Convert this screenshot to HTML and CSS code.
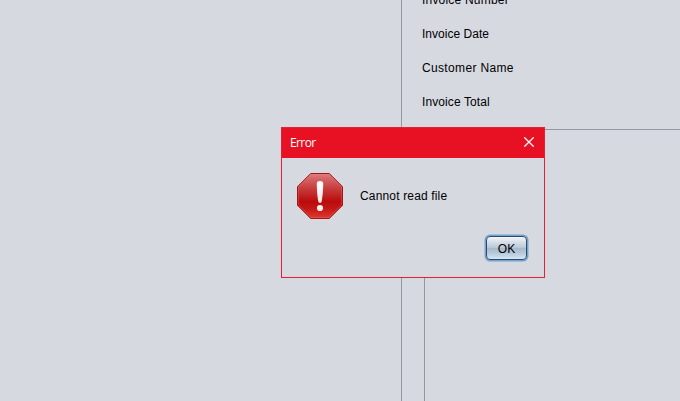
FILE: index.html
```html
<!DOCTYPE html>
<html lang="en">
<head>
<meta charset="utf-8">
<title>Invoices</title>
<link rel="stylesheet" href="styles.css">
</head>
<body>
<main class="window">
  <section class="list-pane"></section>
  <section class="detail-pane">
    <div class="fields">
      <label class="number">Invoice Number</label>
      <label class="date">Invoice Date</label>
      <label class="customer">Customer Name</label>
      <label>Invoice Total</label>
    </div>
    <div class="items"></div>
  </section>
</main>
<div class="dialog" role="alertdialog">
  <header class="titlebar">
    <span class="title">Error</span>
    <svg class="close" width="10" height="10" viewBox="0 0 10 10"><path d="M.3.3l9.4 9.4M9.7.3L.3 9.7" stroke="#fff" stroke-width="1.25"/></svg>
  </header>
  <div class="content">
    <svg class="icon" width="46" height="46" viewBox="0 0 46 46">
      <defs>
        <linearGradient id="red" x1="0" y1="0" x2="0" y2="1">
          <stop offset="0" stop-color="#dc7c7e"/>
          <stop offset=".3" stop-color="#ca4143"/>
          <stop offset=".62" stop-color="#b90c0c"/>
          <stop offset=".78" stop-color="#c51714"/>
          <stop offset="1" stop-color="#e03830"/>
        </linearGradient>
        <linearGradient id="mark" x1="0" y1="0" x2="0" y2="1">
          <stop offset="0" stop-color="#fff"/>
          <stop offset="1" stop-color="#f3e4e4"/>
        </linearGradient>
      </defs>
      <path d="M13.7.5h18.6L45.5 13.7v18.6L32.3 45.5H13.7L.5 32.3V13.7z" fill="url(#red)" stroke="#a01418"/>
      <path d="M14.1 1.5h17.8L44.5 14.1v17.8L31.9 44.5H14.1L1.5 31.9V14.1z" fill="none" stroke="#f08080" stroke-opacity=".3"/>
      <path d="M19.8 10.5C19.8 8.800 21.200 8 23 8s3.200.8 3.200 2.500C26.200 17 25.500 24 24.800 28c-.2 1.300-.9 1.800-1.800 1.800s-1.600-.5-1.800-1.800C20.500 24 19.800 17 19.800 10.500z" fill="url(#mark)"/>
      <circle cx="23" cy="35" r="3.100" fill="#f8eeee"/>
    </svg>
    <span class="message">Cannot read file</span>
  </div>
  <footer class="actions"><button class="ok">OK</button></footer>
</div>
</body>
</html>
```
FILE: styles.css
```css
* { box-sizing: border-box; }
body {
  margin: 0;
  height: 401px;
  overflow: hidden;
  background: #d6d9e0;
  color: #000;
  font: 12px/14px "Liberation Sans", Arial, sans-serif;
}
.window { display: flex; height: 401px; }
.list-pane { width: 402px; border-right: 1px solid #9297a1; }
.detail-pane { flex: 1; display: flex; flex-direction: column; padding-left: 20px; overflow: hidden; }
.fields { display: flex; flex-direction: column; gap: 20px; margin-top: -7px; height: 136px; flex: none; }
.fields label { white-space: nowrap; letter-spacing: .1px; }
.fields .number { letter-spacing: .2px; }
.fields .date { letter-spacing: .03px; }
.fields .customer { letter-spacing: .34px; }
.items { flex: 1; margin-left: 2px; border-left: 1px solid #9297a1; border-top: 1px solid #9297a1; }
.dialog {
  position: absolute;
  left: 281px;
  top: 127px;
  width: 264px;
  height: 151px;
  border: 1px solid #e81f33;
  background: #d6d9e0;
}
.titlebar {
  display: flex;
  align-items: center;
  justify-content: space-between;
  height: 30px;
  padding: 0 10px 0 8px;
  background: #e81123;
  color: #fff;
  font: 12px/16px "Open Sans", "Noto Sans", sans-serif;
}
.title { letter-spacing: -.6px; }
.close { display: block; margin-top: -2px; }
.content { display: flex; align-items: center; padding: 15px 15px 0; }
.icon { display: block; flex: none; }
.message { margin-left: 17px; letter-spacing: .16px; }
.actions { display: flex; justify-content: flex-end; padding: 17px 17px 0; }
.ok {
  width: 41px;
  height: 24px;
  margin: 0;
  padding: 1px 0 0;
  border: 1px solid #2f4a68;
  border-radius: 4px;
  box-shadow: 0 0 0 1.500px #73a4d1;
  background: linear-gradient(#f5f7fa 0%, #d4dce6 25%, #bac8d6 48%, #a7b9ca 52%, #b8cbdc 75%, #d6e7f5 100%);
  color: #000;
  font: 12px/14px "Liberation Sans", Arial, sans-serif;
}
```
